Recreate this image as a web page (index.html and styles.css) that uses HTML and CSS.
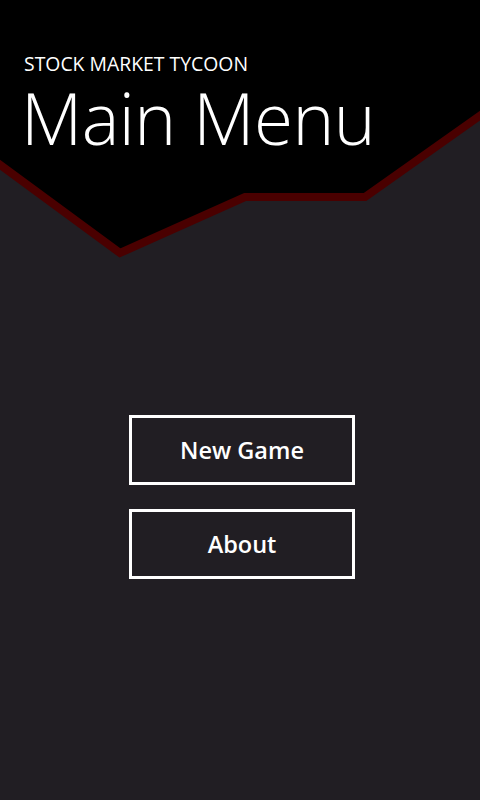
FILE: index.html
```html
<!DOCTYPE html>
<html>
<head>
<meta charset="utf-8">
<link rel="stylesheet" href="styles.css">
</head>
<body>
<div class="page">
  <svg class="backdrop" width="480" height="800" viewBox="0 0 480 800" xmlns="http://www.w3.org/2000/svg">
    <polygon points="0,0 480,0 480,115 365,197 245,197 120,253 0,165" fill="#000"/>
    <polyline points="-5,161 120,253 245,197 365,197 485,112" fill="none" stroke="#4a0000" stroke-width="8" stroke-linejoin="miter"/>
  </svg>
  <header class="header">
    <div class="app-name">STOCK MARKET TYCOON</div>
    <h1 class="title">Main Menu</h1>
  </header>
  <main class="menu">
    <button class="menu-btn">New Game</button>
    <button class="menu-btn">About</button>
  </main>
</div>
</body>
</html>
```
FILE: styles.css
```css
html, body {
  margin: 0;
  padding: 0;
  background: #211e23;
  width: 480px;
  height: 800px;
  overflow: hidden;
}
.page {
  position: relative;
  width: 480px;
  height: 800px;
  font-family: "Open Sans", "Noto Sans", sans-serif;
  color: #fff;
}
.backdrop {
  position: absolute;
  left: 0;
  top: 0;
  z-index: 0;
}
.header {
  position: relative;
  z-index: 1;
  padding: 52px 0 0 24px;
}
.app-name {
  font-size: 19.4px;
  line-height: 24px;
  font-weight: 400;
}
.title {
  margin: 14px 0 0 -3px;
  font-size: 71px;
  line-height: 56px;
  font-weight: 300;
  letter-spacing: -0.6px;
}
.menu {
  position: relative;
  z-index: 1;
  display: flex;
  flex-direction: column;
  align-items: flex-start;
  gap: 24px;
  padding: 269px 0 0 129px;
}
.menu-btn {
  box-sizing: border-box;
  width: 226px;
  height: 70px;
  border: 3px solid #fff;
  background: transparent;
  color: #fff;
  font-family: "Open Sans", "Noto Sans", sans-serif;
  font-size: 23.5px;
  font-weight: 600;
  padding: 0;
  margin: 0;
}
```
